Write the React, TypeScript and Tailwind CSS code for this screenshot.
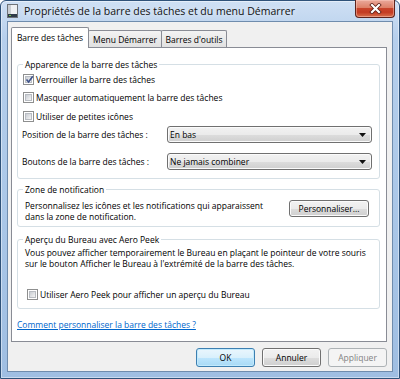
import React from "react";

function Check({ checked = false }: { checked?: boolean }) {
  return (
    <span className="relative flex h-[11px] w-[11px] shrink-0 items-center justify-center border border-[#8e8f8f] bg-white">
      <span className="h-[7px] w-[7px] border border-[#b8bcc2] bg-[linear-gradient(135deg,#c9cdd3,#f4f4f4)]" />
      {checked && (
        <svg className="absolute left-[1px] top-[0px]" width="9" height="9" viewBox="0 0 9 9">
          <path d="M1.5 4.5 L3.6 7 L7.8 1.2" fill="none" stroke="#3d5189" strokeWidth="1.6" />
        </svg>
      )}
    </span>
  );
}

function CheckRow({ label, checked, className }: { label: string; checked?: boolean; className: string }) {
  return (
    <div className={className}>
      <Check checked={checked} />
      <span>{label}</span>
    </div>
  );
}

function Select({ value }: { value: string }) {
  return (
    <div className="flex h-[17px] w-[205px] items-center justify-between rounded-[3px] border border-[#707070] bg-[linear-gradient(#f2f2f2_0%,#ebebeb_50%,#dddddd_51%,#cfcfcf_100%)] pl-[2px] pr-[5px] shadow-[inset_0_0_0_1px_#fbfbfb]">
      <span>{value}</span>
      <svg width="7" height="4" viewBox="0 0 7 4">
        <path d="M0 0 H7 L3.5 4 Z" fill="#111" />
      </svg>
    </div>
  );
}

export default function App() {
  return (
    <div className="h-[379px] w-[400px] bg-white font-['Segoe_UI','Open_Sans',sans-serif] text-[8.5px] leading-[11px] text-black">
      <div className="relative flex h-full w-full flex-col rounded-t-[6px] border border-[#2f5279] bg-[linear-gradient(180deg,#cfe0f4_0%,#b6cfec_10%,#a9c6e7_60%,#9fbee2_100%)] shadow-[inset_0_0_0_1px_rgba(255,255,255,0.45)]">
        {/* title bar */}
        <div className="flex h-[20px] items-center pl-[6px]">
          <svg width="11" height="14" viewBox="0 0 11 14">
            <rect x="0.5" y="0.5" width="10" height="13" fill="#eef0f2" stroke="#6e7378" />
            <rect x="1" y="1" width="3" height="12" fill="#c9cdd2" />
            <rect x="1" y="10" width="9" height="3" fill="#2f3b48" />
            <rect x="2" y="11" width="2" height="1" fill="#6cc24a" />
          </svg>
          <span className="ml-[6px] text-[10.5px] leading-[14px] text-[#111] [text-shadow:0_0_6px_rgba(255,255,255,0.95)]">
            Propriétés de la barre des tâches et du menu Démarrer
          </span>
        </div>
        <div className="absolute right-[4px] top-[-1px] flex h-[18px] w-[40px] items-center justify-center rounded-b-[4px] border border-t-0 border-[#5d231c] bg-[linear-gradient(#eaa99b_0%,#dd8068_45%,#c8442b_50%,#c33b22_72%,#d8704c_100%)] shadow-[inset_0_0_0_1px_rgba(255,210,200,0.45)]">
          <svg width="13" height="11" viewBox="0 0 13 11">
            <path d="M3 2 L10 9 M10 2 L3 9" stroke="#5b1d14" strokeWidth="3.8" strokeLinecap="square" />
            <path d="M3 2 L10 9 M10 2 L3 9" stroke="#ffffff" strokeWidth="2.2" strokeLinecap="square" />
          </svg>
        </div>

        {/* client area */}
        <div className="mx-[6px] mb-[6px] flex flex-1 flex-col border border-[#6f8cad] bg-[#f0f0f0] pt-[5px]">
          <div className="flex h-[20px] items-end pl-[3px]">
            <div className="relative z-10 -mb-px flex h-[21px] w-[78px] items-center justify-center rounded-t-[2px] border border-b-0 border-[#898c95] bg-white pb-[1px]">
              Barre des tâches
            </div>
            <div className="-ml-px flex h-[17px] w-[74px] items-center justify-center rounded-t-[2px] border border-b-0 border-[#898c95] bg-[linear-gradient(#f3f3f3,#e1e1e1)]">
              Menu Démarrer
            </div>
            <div className="-ml-px flex h-[17px] w-[66px] items-center justify-center rounded-t-[2px] border border-b-0 border-[#898c95] bg-[linear-gradient(#f3f3f3,#e1e1e1)]">
              Barres d'outils
            </div>
          </div>

          <div className="ml-[3px] mr-[5px] flex h-[295px] flex-col border border-[#898c95] bg-white pl-[5px] pr-[6px] pt-[11px]">
            <fieldset className="rounded-[3px] border border-[#d5dfe5] pb-[8px] pl-[5px] pr-[7px]">
              <legend className="px-[2px]">Apparence de la barre des tâches</legend>
              <CheckRow className="flex h-[18px] items-center gap-[2px]" checked label="Verrouiller la barre des tâches" />
              <CheckRow className="flex h-[18px] items-center gap-[2px]" label="Masquer automatiquement la barre des tâches" />
              <CheckRow className="mt-[1px] flex h-[19px] items-center gap-[2px]" label="Utiliser de petites icônes" />
              <div className="flex items-center justify-between">
                <span className="-ml-px">Position de la barre des tâches :</span>
                <Select value="En bas" />
              </div>
              <div className="mt-[10px] flex items-center justify-between">
                <span className="-ml-px">Boutons de la barre des tâches :</span>
                <Select value="Ne jamais combiner" />
              </div>
            </fieldset>

            <fieldset className="mt-[5px] rounded-[3px] border border-[#d5dfe5] pb-[4px] pl-[5px] pr-[10px]">
              <legend className="px-[2px]">Zone de notification</legend>
              <div className="mt-[5px] flex items-start justify-between">
                <p className="ml-[2px]">
                  Personnalisez les icônes et les notifications qui apparaissent
                  <br />
                  dans la zone de notification.
                </p>
                <button className="flex h-[17px] w-[80px] items-center justify-center rounded-[3px] border border-[#707070] bg-[linear-gradient(#f2f2f2_0%,#ebebeb_50%,#dddddd_51%,#cfcfcf_100%)] shadow-[inset_0_0_0_1px_#fbfbfb]">
                  Personnaliser...
                </button>
              </div>
            </fieldset>

            <fieldset className="mt-[7px] rounded-[3px] border border-[#d5dfe5] pb-[5px] pl-[5px] pr-[7px]">
              <legend className="px-[2px]">Aperçu du Bureau avec Aero Peek</legend>
              <p className="ml-[2px] mt-[2px]">
                Vous pouvez afficher temporairement le Bureau en plaçant le pointeur de votre souris
                <br />
                sur le bouton Afficher le Bureau à l'extrémité de la barre des tâches.
              </p>
              <CheckRow
                className="ml-[4px] mt-[16px] flex h-[18px] items-center gap-[2px]"
                label="Utiliser Aero Peek pour afficher un aperçu du Bureau"
              />
            </fieldset>

            <a className="mt-[10px] self-start text-[#0066cc] underline">Comment personnaliser la barre des tâches ?</a>
          </div>

          <div className="mt-[6px] flex justify-end gap-[7px] pr-[5px]">
            <button className="flex h-[19px] w-[59px] items-center justify-center rounded-[3px] border border-[#3c7fb1] bg-[linear-gradient(#eaf6fd_0%,#d9f0fc_50%,#bee6fd_51%,#a7d9f5_100%)] shadow-[inset_0_0_0_1px_#c2eafd]">
              OK
            </button>
            <button className="flex h-[19px] w-[59px] items-center justify-center rounded-[3px] border border-[#707070] bg-[linear-gradient(#f2f2f2_0%,#ebebeb_50%,#dddddd_51%,#cfcfcf_100%)] shadow-[inset_0_0_0_1px_#fbfbfb]">
              Annuler
            </button>
            <button className="flex h-[19px] w-[59px] items-center justify-center rounded-[3px] border border-[#adb2b5] bg-[#f4f4f4] text-[#838383]">
              Appliquer
            </button>
          </div>
        </div>
      </div>
    </div>
  );
}
